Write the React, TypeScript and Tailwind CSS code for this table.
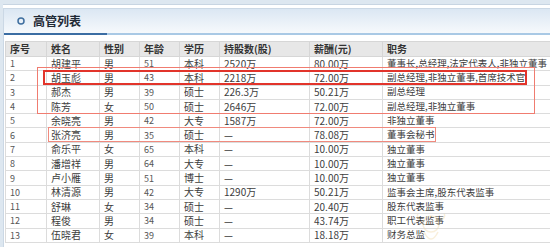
import React from 'react';

type Row = [string, string, string, string, string, string, string, string];

const ROWS: Row[] = [
  ['1', '胡建平', '男', '51', '本科', '2520万', '80.00万', '董事长,总经理,法定代表人,非独立董事'],
  ['2', '胡玉彪', '男', '43', '本科', '2218万', '72.00万', '副总经理,非独立董事,首席技术官'],
  ['3', '郝杰', '男', '39', '硕士', '226.3万', '50.21万', '副总经理'],
  ['4', '陈芳', '女', '50', '硕士', '2646万', '72.00万', '副总经理,非独立董事'],
  ['5', '余晓亮', '男', '42', '大专', '1587万', '72.00万', '非独立董事'],
  ['6', '张济亮', '男', '35', '硕士', '—', '78.08万', '董事会秘书'],
  ['7', '俞乐平', '女', '65', '本科', '—', '10.00万', '独立董事'],
  ['8', '潘增祥', '男', '64', '大专', '—', '10.00万', '独立董事'],
  ['9', '卢小雁', '男', '51', '博士', '—', '10.00万', '独立董事'],
  ['10', '林清源', '男', '42', '大专', '1290万', '50.21万', '监事会主席,股东代表监事'],
  ['11', '舒琳', '女', '34', '硕士', '—', '20.40万', '股东代表监事'],
  ['12', '程俊', '男', '34', '硕士', '—', '43.74万', '职工代表监事'],
  ['13', '伍晓君', '女', '39', '本科', '—', '18.18万', '财务总监'],
];

const HEADERS = ['序号', '姓名', '性别', '年龄', '学历', '持股数(股)', '薪酬(元)', '职务'];
const WIDTHS = ['w-[41px]', 'w-[53px]', 'w-[40px]', 'w-[40px]', 'w-[40px]', 'w-[90px]', 'w-[73px]', 'w-[183px]'];

const cellText = (i: number) => {
  if (i === 0 || i === 3) return 'text-[9px] text-[#555]';
  if (i === 7) return 'text-[9.5px]';
  return 'text-[10px]';
};

const App: React.FC = () => {
  return (
    <div
      className="relative w-[550px] h-[247px] overflow-hidden bg-[#dde7f0] pl-[3px] pt-[4px]"
      style={{ fontFamily: '"Noto Sans CJK SC", "Noto Sans", sans-serif' }}
    >
      <div className="bg-white border-t border-[#c8d5e2] pt-[3px] h-full">
        <div className="border-t border-l border-[#cbd8e5] w-[600px] h-full bg-white">
          {/* panel title */}
          <div className="h-[24px] flex items-center pl-[13px] gap-[8px] bg-gradient-to-b from-[#dbe7f3] to-[#f6f9fc]">
            <svg width="8" height="8" viewBox="0 0 8 8">
              <circle cx="4" cy="4" r="3" fill="none" stroke="#3f6f9f" strokeWidth="1.5" />
            </svg>
            <span className="text-[12px] font-bold text-[#1f2a36] leading-none">高管列表</span>
          </div>
          <div className="h-[2px] flex bg-[#a9c9e5]">
            <div className="w-[103px] bg-[#3b6da3]" />
          </div>
          <div className="h-[6px]" />

          {/* table */}
          <table className="table-fixed border-collapse w-[560px] ml-px text-[#3d3d3d]">
            <thead>
              <tr className="h-[15px] bg-[#e7e7e7]">
                {HEADERS.map((h, i) => (
                  <th
                    key={h}
                    className={`${WIDTHS[i]} border border-[#d6d6d6] px-[4px] text-left text-[10px] font-bold text-[#333] leading-none whitespace-nowrap`}
                  >
                    {h}
                  </th>
                ))}
              </tr>
            </thead>
            <tbody>
              {ROWS.map((r) => (
                <tr key={r[0]} className="h-[14.3px]">
                  {r.map((c, i) => (
                    <td
                      key={i}
                      className={`border border-[#dcdcdc] px-[4px] leading-none whitespace-nowrap ${cellText(i)}`}
                    >
                      {c}
                    </td>
                  ))}
                </tr>
              ))}
            </tbody>
          </table>
        </div>
      </div>

      {/* highlight boxes drawn over the table */}
      <div className="absolute left-[37px] top-[67px] w-[498px] h-[47px] border border-[#f07c70]" />
      <div className="absolute left-[43px] top-[70px] w-[484px] h-[15px] border-2 border-[#e2342b]" />
      <div className="absolute left-[48px] top-[127px] w-[388px] h-[15px] border border-[#f08a7e]" />

      {/* faint watermark */}
      <svg className="absolute left-[414px] top-[212px] opacity-40" width="34" height="36" viewBox="0 0 34 36">
        <circle cx="17" cy="12" r="8" fill="none" stroke="#f2d9a6" strokeWidth="1.5" />
        <path d="M6 8 Q2 4 4 2 M28 8 Q32 4 30 2" fill="none" stroke="#f2d9a6" strokeWidth="1.5" />
        <path d="M10 20 Q17 34 24 20" fill="none" stroke="#f2d9a6" strokeWidth="1.5" />
      </svg>
    </div>
  );
};

export default App;
